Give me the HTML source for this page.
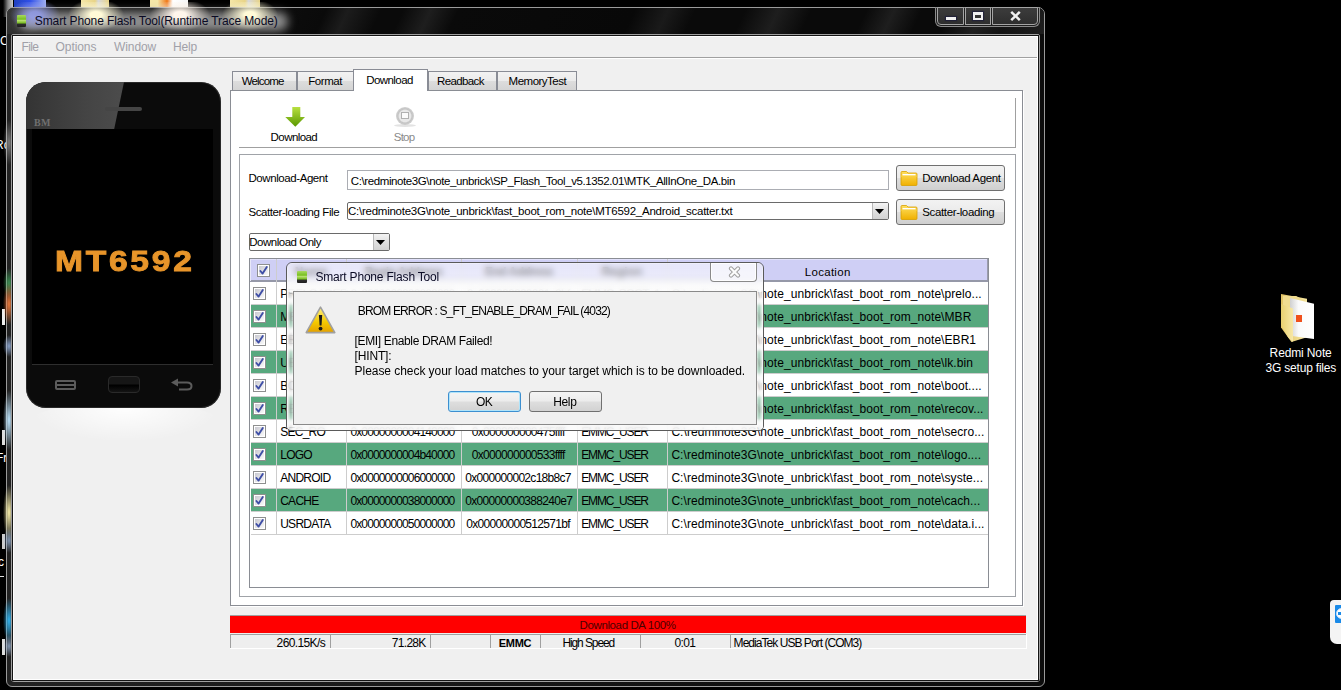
<!DOCTYPE html>
<html><head><meta charset="utf-8">
<style>
*{margin:0;padding:0;box-sizing:border-box}
html,body{width:1341px;height:690px;overflow:hidden;background:#000;font-family:"Liberation Sans",sans-serif;color:#000}
.a{position:absolute}
.nw{white-space:nowrap}
.tab{border:1px solid #898c95;border-bottom:none;background:linear-gradient(#f2f2f2,#ebebeb 50%,#dddddd 50%,#d4d4d4)}
.btn{border:1px solid #707070;border-radius:3px;background:linear-gradient(#f2f2f2,#ebebeb 48%,#dddddd 52%,#cfcfcf)}
</style></head><body>
<div class="a" style="left:14px;top:0;width:32px;height:8px;background:linear-gradient(90deg,#2040c0,#3050e8 50%,#a0b0f0)"></div>
<div class="a" style="left:3px;top:0;width:10px;height:17px;background:linear-gradient(90deg,#000,#888 50%,#ccc)"></div>
<div class="a" style="left:81px;top:0;width:28px;height:7px;background:linear-gradient(90deg,#f4e6a8,#e8d488 50%,#d8d8d8 62%,#e8d488)"></div>
<div class="a" style="left:150px;top:0;width:38px;height:7px;background:linear-gradient(90deg,#f4e6a8 20%,#f07818 45%,#fff 60%,#f4f4f4)"></div>
<div class="a" style="left:230px;top:0;width:30px;height:7px;background:linear-gradient(90deg,#f4e6a8,#e8d488 50%,#d8d8d8 62%,#e8d488)"></div>
<div class="a" style="left:1281px;top:294px;width:34px;height:50px">
 <div class="a" style="left:0;top:0;width:26px;height:48px;background:linear-gradient(90deg,#e2c466,#f6e6a0);clip-path:polygon(0 0,100% 10%,100% 90%,40% 100%,0 70%)"></div>
 <div class="a" style="left:2px;top:2px;width:22px;height:12px;background:#f0dc90;clip-path:polygon(0 0,60% 0,100% 40%,100% 100%,0 100%)"></div>
 <div class="a" style="left:9px;top:4px;width:24px;height:41px;background:linear-gradient(90deg,#d0d0d0,#fafafa 35%,#fff);clip-path:polygon(0 0,100% 14%,100% 100%,0 92%)"></div>
 <div class="a" style="left:0;top:10px;width:12px;height:38px;background:linear-gradient(90deg,#e8d070,#f8e8a8);clip-path:polygon(0 0,100% 12%,100% 100%,60% 88%,0 55%)"></div>
 <div class="a" style="left:15px;top:21px;width:6px;height:7px;background:#f0501c"></div>
</div>
<div class="a" style="left:1330px;top:600px;width:14px;height:44px;border-radius:4px 0 0 7px;background:#f4f4f4"></div>
<div class="a" style="left:1335px;top:605px;width:8px;height:18px;background:#1a8ae8;border-radius:1px"></div>
<div class="a" style="left:1336px;top:608px;width:11px;height:11px;border-radius:50%;background:#fff;border:1px solid #c8e0f8"></div>
<div class="a" style="left:1338px;top:612px;width:6px;height:3px;background:#1a8ae8"></div>
<div class="a" style="left:2px;top:309px;width:3px;height:16px;background:#eee"></div>
<div class="a" style="left:2px;top:430px;width:3px;height:15px;background:#ddd"></div>
<div class="a" style="left:2px;top:534px;width:3px;height:15px;background:#ccc"></div>
<div class="a" style="left:2px;top:639px;width:3px;height:16px;background:#ddd"></div>
<div class="a nw" style="left:0.00px;top:35px;font-size:12px;line-height:12px;letter-spacing:0.000px;color:#fff;">C</div>
<div class="a nw" style="left:-1.00px;top:139px;font-size:12px;line-height:12px;letter-spacing:0.000px;color:#fff;margin-left:-4px">Rc</div>
<div class="a nw" style="left:-1.00px;top:452px;font-size:12px;line-height:12px;letter-spacing:0.000px;color:#fff;margin-left:-3px">Fr</div>
<div class="a nw" style="left:-1.00px;top:556px;font-size:12px;line-height:12px;letter-spacing:0.000px;color:#fff;margin-left:-1px">c</div>
<div class="a" style="left:0;top:576px;width:4px;height:1px;background:#ddd"></div>
<div class="a" style="left:6px;top:7px;width:1039px;height:680px;border:1px solid #9a9a9a;border-radius:7px 7px 6px 6px;background:linear-gradient(90deg,#222,#1a1a1a 30%,#101010 70%,#0c0c0c)"></div>
<div class="a" style="left:3px;top:268px;width:12px;height:30px;background:radial-gradient(ellipse 50% 50% at 50% 50%,rgba(70,180,100,.75),rgba(0,0,0,0))"></div>
<div class="a" style="left:3px;top:283px;width:12px;height:42px;background:radial-gradient(ellipse 50% 50% at 50% 50%,rgba(245,125,60,.95),rgba(0,0,0,0))"></div>
<div class="a" style="left:3px;top:335px;width:12px;height:22px;background:radial-gradient(ellipse 50% 50% at 50% 50%,rgba(160,190,240,.8),rgba(0,0,0,0))"></div>
<div class="a" style="left:3px;top:390px;width:12px;height:60px;background:radial-gradient(ellipse 50% 50% at 50% 50%,rgba(190,230,255,1),rgba(0,0,0,0))"></div>
<div class="a" style="left:3px;top:485px;width:12px;height:55px;background:radial-gradient(ellipse 50% 50% at 50% 50%,rgba(250,240,170,1),rgba(0,0,0,0))"></div>
<div class="a" style="left:3px;top:528px;width:12px;height:25px;background:radial-gradient(ellipse 50% 50% at 50% 50%,rgba(170,200,240,.7),rgba(0,0,0,0))"></div>
<div class="a" style="left:3px;top:598px;width:12px;height:45px;background:radial-gradient(ellipse 50% 50% at 50% 50%,rgba(50,180,240,1),rgba(0,0,0,0))"></div>
<div class="a" style="left:3px;top:635px;width:12px;height:22px;background:radial-gradient(ellipse 50% 50% at 50% 50%,rgba(170,200,240,.7),rgba(0,0,0,0))"></div>
<div class="a" style="left:3px;top:120px;width:12px;height:45px;background:radial-gradient(ellipse 50% 50% at 50% 50%,rgba(210,210,210,.5),rgba(0,0,0,0))"></div>
<div class="a" style="left:7px;top:8px;width:1037px;height:26px;border-radius:6px 6px 0 0;background:linear-gradient(115deg,#3a3a3a 0px,#1a1a1a 40px,#0a0a0a 290px,#1c1c1c 310px,#0a0a0a 340px,#0a0a0a 360px,#1e1e1e 385px,#0a0a0a 410px,#080808 570px,#1a1a1a 600px,#0a0a0a 625px,#0a0a0a 670px,#1e1e1e 700px,#0a0a0a 730px,#0a0a0a 780px,#1e1e1e 805px,#0a0a0a 830px,#0a0a0a 855px,#202020 885px,#141414 910px,#2a2a2a 1000px,#1a1a1a 1037px)"></div>
<div class="a" style="left:18px;top:12px;width:270px;height:19px;border-radius:10px;background:rgba(175,175,175,.8);filter:blur(5px)"></div>
<div class="a" style="left:10px;top:2px;width:50px;height:32px;background:radial-gradient(ellipse 50% 50% at 50% 40%,rgba(150,160,240,.85) 20%,rgba(0,0,0,0))"></div>
<div class="a" style="left:68px;top:2px;width:56px;height:32px;background:radial-gradient(ellipse 50% 50% at 50% 40%,rgba(255,250,215,1) 20%,rgba(0,0,0,0))"></div>
<div class="a" style="left:150px;top:2px;width:60px;height:32px;background:radial-gradient(ellipse 50% 50% at 50% 40%,rgba(255,245,235,1) 20%,rgba(0,0,0,0))"></div>
<div class="a" style="left:222px;top:2px;width:56px;height:32px;background:radial-gradient(ellipse 50% 50% at 50% 40%,rgba(255,250,215,1) 20%,rgba(0,0,0,0))"></div>
<div class="a" style="left:17px;top:15px;width:9px;height:12px;border-radius:1px;background:linear-gradient(#a8d860,#78c020 35%,#b8e070 45%,#70b818 70%,#303030 72%,#202020)"></div>
<div class="a nw" style="left:34.80px;top:15px;font-size:12px;line-height:12px;letter-spacing:-0.102px;color:#0a0a24;">Smart Phone Flash Tool(Runtime Trace Mode)</div>
<div class="a" style="left:935px;top:7px;width:105px;height:20px;border:1px solid #8a8a8a;border-top:none;border-radius:0 0 6px 6px;background:#1e1e1e"></div>
<div class="a" style="left:935px;top:7px;width:105px;height:1px;background:#8a8a8a"></div>
<div class="a" style="left:937px;top:7px;width:27px;height:18px;border:1px solid #a4a4a4;border-radius:0 0 0 4px;background:linear-gradient(#3c3c3c,#2e2e2e)"></div>
<div class="a" style="left:965px;top:7px;width:26px;height:18px;border:1px solid #a4a4a4;background:linear-gradient(#3c3c3c,#2e2e2e)"></div>
<div class="a" style="left:992px;top:7px;width:46px;height:18px;border:1px solid #a4a4a4;border-radius:0 0 4px 0;background:linear-gradient(#3c3c3c,#2e2e2e)"></div>
<div class="a" style="left:946px;top:17px;width:10px;height:3px;background:#f0f0f0;box-shadow:0 0 1px 1px rgba(20,20,60,.55)"></div>
<div class="a" style="left:973px;top:12px;width:10px;height:8px;border:2px solid #f0f0f0;border-top-width:3px;box-shadow:0 0 1px 1px rgba(20,20,60,.55)"></div>
<svg class="a" style="left:1010px;top:11px" width="11" height="10" viewBox="0 0 11 10"><path d="M1.2 0.9 L9.8 9.1 M9.8 0.9 L1.2 9.1" stroke="#f0f0f0" stroke-width="2.5"/></svg>
<div class="a" style="left:11px;top:34px;width:1029px;height:648px;border:1px solid #a0a0a0;border-radius:2px 2px 3px 3px"></div>
<div class="a" style="left:12px;top:35px;width:1027px;height:646px;background:#141414"></div>
<div class="a" style="left:13px;top:36px;width:1025px;height:644px;background:#fff"></div>
<div class="a" style="left:14px;top:37px;width:1023px;height:642px;background:#f0f0f0"></div>
<div class="a nw" style="left:21.60px;top:41px;font-size:12px;line-height:12px;letter-spacing:-0.633px;color:#a0a0a8;">File</div>
<div class="a nw" style="left:55.60px;top:41px;font-size:12px;line-height:12px;letter-spacing:-0.083px;color:#a0a0a8;">Options</div>
<div class="a nw" style="left:114.00px;top:41px;font-size:12px;line-height:12px;letter-spacing:-0.080px;color:#a0a0a8;">Window</div>
<div class="a nw" style="left:173.00px;top:41px;font-size:12px;line-height:12px;letter-spacing:-0.167px;color:#a0a0a8;">Help</div>
<div class="a" style="left:14px;top:57px;width:1023px;height:1px;background:#a0a0a0"></div>
<div class="a" style="left:14px;top:58px;width:1023px;height:1px;background:#fff"></div>
<div class="a" style="left:30px;top:402px;width:190px;height:40px;border-radius:50%;background:radial-gradient(ellipse at 50% 15%,rgba(255,255,255,.95),rgba(240,240,240,0) 70%)"></div>
<div class="a" style="left:26px;top:82px;width:195px;height:326px;border-radius:20px;background:#0b0b0b;overflow:hidden;box-shadow:0 0 0 1px rgba(60,60,60,.6) inset">
  <div class="a" style="left:0;top:0;width:98px;height:47px;background:linear-gradient(90deg,#343434,#444 60%,#4c4c4c);clip-path:polygon(0 0,100% 0,90% 100%,0 100%)"></div>
  <div class="a" style="left:79px;top:25px;width:37px;height:4px;border-radius:2px;background:#454545"></div>
  <div class="a nw" style="left:8px;top:36px;font-family:'Liberation Serif',serif;font-size:10px;line-height:10px;color:#707070;letter-spacing:0.3px;font-weight:bold">BM</div>
  <div class="a" style="left:6px;top:47px;width:181px;height:235px;background:#000"></div>
  <div class="a" style="left:6px;top:282px;width:181px;height:1px;background:#2e2e2e"></div>
  <div class="a" style="left:29px;top:298px;width:21px;height:10px;border:2px solid #5c5c5c;border-radius:2px"></div>
  <div class="a" style="left:31px;top:302px;width:17px;height:2px;background:#5c5c5c"></div>
  <div class="a" style="left:82px;top:294px;width:32px;height:17px;border:1px solid #2a2a2a;border-radius:4px;background:linear-gradient(#161616 45%,#000 55%,#141414)"></div>
  <svg class="a" style="left:144px;top:296px" width="24" height="14" viewBox="0 0 24 14"><path d="M7 4.5 H17 Q21.5 4.5 21.5 8 Q21.5 11.5 17 11.5 H9" fill="none" stroke="#5c5c5c" stroke-width="2"/><path d="M1 4.5 L8 0.5 L8 8.5 Z" fill="#5c5c5c"/></svg>
</div>
<div class="a nw" style="left:54.80px;top:246px;font-size:30px;line-height:30px;letter-spacing:2.420px;color:#e8952a;font-weight:bold;transform:scaleX(1.12);transform-origin:0 0;-webkit-text-stroke:0.9px currentColor;">MT6592</div>
<div class="a" style="left:230px;top:90px;width:793px;height:516px;border:1px solid #8a8d94;background:#fff"></div>
<div class="a" style="left:231px;top:606px;width:793px;height:1px;background:#fff"></div>
<div class="a" style="left:1023px;top:91px;width:1px;height:515px;background:#fff"></div>
<div class="a tab" style="left:232px;top:71px;width:65px;height:19px"></div>
<div class="a nw" style="left:241.80px;top:76px;font-size:11.5px;line-height:11.5px;letter-spacing:-0.867px;color:#000;">Welcome</div>
<div class="a tab" style="left:297px;top:71px;width:57px;height:19px"></div>
<div class="a nw" style="left:308.20px;top:76px;font-size:11.5px;line-height:11.5px;letter-spacing:-0.420px;color:#000;">Format</div>
<div class="a tab" style="left:428px;top:71px;width:69px;height:19px"></div>
<div class="a nw" style="left:437.00px;top:76px;font-size:11.5px;line-height:11.5px;letter-spacing:-0.629px;color:#000;">Readback</div>
<div class="a tab" style="left:497px;top:71px;width:80px;height:19px"></div>
<div class="a nw" style="left:508.60px;top:76px;font-size:11.5px;line-height:11.5px;letter-spacing:-0.500px;color:#000;">MemoryTest</div>
<div class="a" style="left:353px;top:69px;width:75px;height:22px;border:1px solid #898c95;border-bottom:none;background:#fff"></div>
<div class="a nw" style="left:366.20px;top:75px;font-size:11.5px;line-height:11.5px;letter-spacing:-0.557px;color:#000;">Download</div>
<div class="a" style="left:239px;top:147px;width:777px;height:1px;background:#a0a0a0"></div>
<div class="a" style="left:1015px;top:98px;width:1px;height:50px;background:#a0a0a0"></div>
<svg class="a" style="left:285px;top:107px" width="20" height="20" viewBox="0 0 20 20"><defs><linearGradient id="ga" x1="0" y1="0" x2="0" y2="1"><stop offset="0" stop-color="#b8e040"/><stop offset="1" stop-color="#5a9800"/></linearGradient></defs><path d="M7.3 0 H15.3 V10 H20 L10.3 19.7 L0.3 10 H7.3 Z" fill="url(#ga)"/></svg>
<div class="a nw" style="left:270.60px;top:132px;font-size:11.5px;line-height:11.5px;letter-spacing:-0.571px;color:#000;">Download</div>
<div class="a" style="left:396px;top:107px;width:18px;height:18px;border-radius:50%;background:radial-gradient(circle,#e8e8e8 0 45%,#c4c4c4 55%,#d8d8d8 80%,#a8a8a8 100%)"></div>
<div class="a" style="left:401px;top:112px;width:8px;height:7px;background:#fafafa;border:1px solid #b0b0b0"></div>
<div class="a" style="left:394px;top:124px;width:22px;height:3px;border-radius:50%;background:rgba(200,200,200,.5)"></div>
<div class="a nw" style="left:393.80px;top:132px;font-size:11.5px;line-height:11.5px;letter-spacing:-0.800px;color:#8a8a8a;">Stop</div>
<div class="a" style="left:239px;top:154px;width:777px;height:443px;border:1px solid #a0a3a8"></div>
<div class="a nw" style="left:248.40px;top:173px;font-size:11.5px;line-height:11.5px;letter-spacing:-0.415px;color:#000;">Download-Agent</div>
<div class="a nw" style="left:248.40px;top:207px;font-size:11.5px;line-height:11.5px;letter-spacing:-0.411px;color:#000;">Scatter-loading File</div>
<div class="a" style="left:347px;top:170px;width:542px;height:20px;border:1px solid #abadb3;background:#fff"></div>
<div class="a nw" style="left:350.80px;top:176px;font-size:11.5px;line-height:11.5px;letter-spacing:-0.400px;color:#000;">C:\redminote3G\note_unbrick\SP_Flash_Tool_v5.1352.01\MTK_AllInOne_DA.bin</div>
<div class="a" style="left:347px;top:202px;width:542px;height:18px;border:1px solid #6a6a6a;border-radius:2px;background:#fff"></div>
<div class="a" style="left:872px;top:203px;width:16px;height:16px;background:linear-gradient(#f4f4f4,#e0e0e0 50%,#d2d2d2);border-left:1px solid #b8b8b8"></div>
<svg class="a" style="left:875px;top:209px" width="9" height="5"><path d="M0 0H9L4.5 5Z" fill="#000"/></svg>
<div class="a nw" style="left:348.00px;top:206px;font-size:11.5px;line-height:11.5px;letter-spacing:-0.250px;color:#000;">C:\redminote3G\note_unbrick\fast_boot_rom_note\MT6592_Android_scatter.txt</div>
<div class="a btn" style="left:896px;top:165px;width:109px;height:26px"></div>
<svg class="a" style="left:900px;top:171px" width="18" height="15" viewBox="0 0 18 15"><defs><linearGradient id="fg1" x1="0" y1="0" x2="0" y2="1"><stop offset="0" stop-color="#ffe060"/><stop offset="1" stop-color="#f0b000"/></linearGradient></defs><path d="M1 1.5 Q1 0.5 2 0.5 H6.5 L8 2 H16 Q17 2 17 3 V13.5 Q17 14.5 16 14.5 H2 Q1 14.5 1 13.5 Z" fill="url(#fg1)" stroke="#d8a000" stroke-width="0.8"/><rect x="2.5" y="3" width="13" height="1.6" fill="#fff"/><rect x="1" y="4.6" width="16" height="1" fill="#f8d040"/></svg>
<div class="a nw" style="left:922.20px;top:173px;font-size:11.5px;line-height:11.5px;letter-spacing:-0.392px;color:#000;">Download Agent</div>
<div class="a btn" style="left:896px;top:199px;width:109px;height:26px"></div>
<svg class="a" style="left:900px;top:205px" width="18" height="15" viewBox="0 0 18 15"><defs><linearGradient id="fg2" x1="0" y1="0" x2="0" y2="1"><stop offset="0" stop-color="#ffe060"/><stop offset="1" stop-color="#f0b000"/></linearGradient></defs><path d="M1 1.5 Q1 0.5 2 0.5 H6.5 L8 2 H16 Q17 2 17 3 V13.5 Q17 14.5 16 14.5 H2 Q1 14.5 1 13.5 Z" fill="url(#fg2)" stroke="#d8a000" stroke-width="0.8"/><rect x="2.5" y="3" width="13" height="1.6" fill="#fff"/><rect x="1" y="4.6" width="16" height="1" fill="#f8d040"/></svg>
<div class="a nw" style="left:922.20px;top:207px;font-size:11.5px;line-height:11.5px;letter-spacing:-0.350px;color:#000;">Scatter-loading</div>
<div class="a" style="left:249px;top:233px;width:141px;height:18px;border:1px solid #6a6a6a;border-radius:2px;background:#fff"></div>
<div class="a" style="left:373px;top:234px;width:16px;height:16px;background:linear-gradient(#f4f4f4,#e0e0e0 50%,#d2d2d2);border-left:1px solid #b8b8b8"></div>
<svg class="a" style="left:376px;top:240px" width="9" height="5"><path d="M0 0H9L4.5 5Z" fill="#000"/></svg>
<div class="a nw" style="left:249.20px;top:237px;font-size:11.5px;line-height:11.5px;letter-spacing:-0.483px;color:#000;">Download Only</div>
<div class="a" style="left:249px;top:258px;width:740px;height:330px;border:1px solid #8a8d94;background:#fff"></div>
<div class="a" style="left:250px;top:259px;width:738px;height:23px;background:#cfcff5"></div>
<div class="a" style="left:250px;top:259px;width:738px;height:1px;background:#e2e2fc"></div>
<div class="a" style="left:987px;top:259px;width:1px;height:23px;background:#9a9cac"></div>
<div class="a" style="left:250px;top:280px;width:738px;height:2px;background:#9598a8"></div>
<div class="a nw" style="left:804.80px;top:267px;font-size:11.5px;line-height:11.5px;letter-spacing:0.286px;color:#000;">Location</div>
<div class="a nw" style="left:276px;top:266px;width:70px;text-align:center;font-size:12px;line-height:12px;font-weight:bold">Name</div>
<div class="a nw" style="left:346px;top:266px;width:115px;text-align:center;font-size:12px;line-height:12px;letter-spacing:-0.5px;font-weight:bold">Begin Address</div>
<div class="a nw" style="left:461px;top:266px;width:116px;text-align:center;font-size:12px;line-height:12px;letter-spacing:-0.5px;font-weight:bold">End Address</div>
<div class="a nw" style="left:577px;top:266px;width:90px;text-align:center;font-size:12px;line-height:12px;font-weight:bold">Region</div>
<svg width="0" height="0" style="position:absolute"><defs><linearGradient id="cbg" x1="0" y1="0" x2="1" y2="1"><stop offset="0" stop-color="#c8c8d0"/><stop offset="1" stop-color="#fafafa"/></linearGradient></defs></svg>
<svg class="a" style="left:257px;top:264px" width="13" height="13" viewBox="0 0 13 13"><rect x="0.5" y="0.5" width="12" height="12" fill="#fff" stroke="#8e8f8f"/><rect x="2" y="2" width="9" height="9" fill="url(#cbg)"/><path d="M3.4 7 L5.6 9.6 L9.8 3" fill="none" stroke="#3e4ea6" stroke-width="1.9" stroke-linecap="round" stroke-linejoin="round"/></svg>
<div class="a" style="left:251px;top:304px;width:737px;height:1px;background:#cdcdcd"></div>
<svg class="a" style="left:253px;top:287px" width="13" height="13" viewBox="0 0 13 13"><rect x="0.5" y="0.5" width="12" height="12" fill="#fff" stroke="#8e8f8f"/><rect x="2" y="2" width="9" height="9" fill="url(#cbg)"/><path d="M3.4 7 L5.6 9.6 L9.8 3" fill="none" stroke="#3e4ea6" stroke-width="1.9" stroke-linecap="round" stroke-linejoin="round"/></svg>
<div class="a nw" style="left:280.20px;top:288px;font-size:12px;line-height:12px;letter-spacing:-0.733px;color:#000;">PRELOADER</div>
<div class="a nw" style="left:350.40px;top:288px;font-size:12px;line-height:12px;letter-spacing:-0.859px;color:#000;">0x0000000000000000</div>
<div class="a nw" style="left:466.80px;top:288px;font-size:12px;line-height:12px;letter-spacing:-0.700px;color:#000;">0x000000000001c2bf</div>
<div class="a nw" style="left:581.20px;top:288px;font-size:12px;line-height:12px;letter-spacing:-1.112px;color:#000;">EMMC_BOOT_1</div>
<div class="a nw" style="left:671.40px;top:288px;font-size:12px;line-height:12px;letter-spacing:0.063px;color:#000;">C:\redminote3G\note_unbrick\fast_boot_rom_note\prelo...</div>
<div class="a" style="left:251px;top:305px;width:737px;height:22px;background:#57a87e"></div>
<div class="a" style="left:251px;top:327px;width:737px;height:1px;background:#cdcdcd"></div>
<svg class="a" style="left:253px;top:310px" width="13" height="13" viewBox="0 0 13 13"><rect x="0.5" y="0.5" width="12" height="12" fill="#fff" stroke="#8e8f8f"/><rect x="2" y="2" width="9" height="9" fill="url(#cbg)"/><path d="M3.4 7 L5.6 9.6 L9.8 3" fill="none" stroke="#3e4ea6" stroke-width="1.9" stroke-linecap="round" stroke-linejoin="round"/></svg>
<div class="a nw" style="left:280.20px;top:311px;font-size:12px;line-height:12px;letter-spacing:-0.733px;color:#000;">MBR</div>
<div class="a nw" style="left:350.40px;top:311px;font-size:12px;line-height:12px;letter-spacing:-0.859px;color:#000;">0x0000000000000000</div>
<div class="a nw" style="left:468.30px;top:311px;font-size:12px;line-height:12px;letter-spacing:-0.700px;color:#000;">0x00000000000001ff</div>
<div class="a nw" style="left:581.20px;top:311px;font-size:12px;line-height:12px;letter-spacing:-1.112px;color:#000;">EMMC_USER</div>
<div class="a nw" style="left:671.40px;top:311px;font-size:12px;line-height:12px;letter-spacing:0.063px;color:#000;">C:\redminote3G\note_unbrick\fast_boot_rom_note\MBR</div>
<div class="a" style="left:251px;top:350px;width:737px;height:1px;background:#cdcdcd"></div>
<svg class="a" style="left:253px;top:333px" width="13" height="13" viewBox="0 0 13 13"><rect x="0.5" y="0.5" width="12" height="12" fill="#fff" stroke="#8e8f8f"/><rect x="2" y="2" width="9" height="9" fill="url(#cbg)"/><path d="M3.4 7 L5.6 9.6 L9.8 3" fill="none" stroke="#3e4ea6" stroke-width="1.9" stroke-linecap="round" stroke-linejoin="round"/></svg>
<div class="a nw" style="left:280.20px;top:334px;font-size:12px;line-height:12px;letter-spacing:-0.733px;color:#000;">EBR1</div>
<div class="a nw" style="left:350.40px;top:334px;font-size:12px;line-height:12px;letter-spacing:-0.859px;color:#000;">0x0000000000080000</div>
<div class="a nw" style="left:468.30px;top:334px;font-size:12px;line-height:12px;letter-spacing:-0.700px;color:#000;">0x00000000000801ff</div>
<div class="a nw" style="left:581.20px;top:334px;font-size:12px;line-height:12px;letter-spacing:-1.112px;color:#000;">EMMC_USER</div>
<div class="a nw" style="left:671.40px;top:334px;font-size:12px;line-height:12px;letter-spacing:0.063px;color:#000;">C:\redminote3G\note_unbrick\fast_boot_rom_note\EBR1</div>
<div class="a" style="left:251px;top:351px;width:737px;height:22px;background:#57a87e"></div>
<div class="a" style="left:251px;top:373px;width:737px;height:1px;background:#cdcdcd"></div>
<svg class="a" style="left:253px;top:356px" width="13" height="13" viewBox="0 0 13 13"><rect x="0.5" y="0.5" width="12" height="12" fill="#fff" stroke="#8e8f8f"/><rect x="2" y="2" width="9" height="9" fill="url(#cbg)"/><path d="M3.4 7 L5.6 9.6 L9.8 3" fill="none" stroke="#3e4ea6" stroke-width="1.9" stroke-linecap="round" stroke-linejoin="round"/></svg>
<div class="a nw" style="left:280.20px;top:357px;font-size:12px;line-height:12px;letter-spacing:-0.733px;color:#000;">UBOOT</div>
<div class="a nw" style="left:350.40px;top:357px;font-size:12px;line-height:12px;letter-spacing:-0.859px;color:#000;">0x0000000003d20000</div>
<div class="a nw" style="left:466.80px;top:357px;font-size:12px;line-height:12px;letter-spacing:-0.700px;color:#000;">0x0000000003d5ebcf</div>
<div class="a nw" style="left:581.20px;top:357px;font-size:12px;line-height:12px;letter-spacing:-1.112px;color:#000;">EMMC_USER</div>
<div class="a nw" style="left:671.40px;top:357px;font-size:12px;line-height:12px;letter-spacing:0.063px;color:#000;">C:\redminote3G\note_unbrick\fast_boot_rom_note\lk.bin</div>
<div class="a" style="left:251px;top:396px;width:737px;height:1px;background:#cdcdcd"></div>
<svg class="a" style="left:253px;top:379px" width="13" height="13" viewBox="0 0 13 13"><rect x="0.5" y="0.5" width="12" height="12" fill="#fff" stroke="#8e8f8f"/><rect x="2" y="2" width="9" height="9" fill="url(#cbg)"/><path d="M3.4 7 L5.6 9.6 L9.8 3" fill="none" stroke="#3e4ea6" stroke-width="1.9" stroke-linecap="round" stroke-linejoin="round"/></svg>
<div class="a nw" style="left:280.20px;top:380px;font-size:12px;line-height:12px;letter-spacing:-0.733px;color:#000;">BOOTIMG</div>
<div class="a nw" style="left:350.40px;top:380px;font-size:12px;line-height:12px;letter-spacing:-0.859px;color:#000;">0x0000000003d80000</div>
<div class="a nw" style="left:468.30px;top:380px;font-size:12px;line-height:12px;letter-spacing:-0.700px;color:#000;">0x000000000428a7ff</div>
<div class="a nw" style="left:581.20px;top:380px;font-size:12px;line-height:12px;letter-spacing:-1.112px;color:#000;">EMMC_USER</div>
<div class="a nw" style="left:671.40px;top:380px;font-size:12px;line-height:12px;letter-spacing:0.063px;color:#000;">C:\redminote3G\note_unbrick\fast_boot_rom_note\boot....</div>
<div class="a" style="left:251px;top:397px;width:737px;height:22px;background:#57a87e"></div>
<div class="a" style="left:251px;top:419px;width:737px;height:1px;background:#cdcdcd"></div>
<svg class="a" style="left:253px;top:402px" width="13" height="13" viewBox="0 0 13 13"><rect x="0.5" y="0.5" width="12" height="12" fill="#fff" stroke="#8e8f8f"/><rect x="2" y="2" width="9" height="9" fill="url(#cbg)"/><path d="M3.4 7 L5.6 9.6 L9.8 3" fill="none" stroke="#3e4ea6" stroke-width="1.9" stroke-linecap="round" stroke-linejoin="round"/></svg>
<div class="a nw" style="left:280.20px;top:403px;font-size:12px;line-height:12px;letter-spacing:-0.733px;color:#000;">RECOVERY</div>
<div class="a nw" style="left:350.40px;top:403px;font-size:12px;line-height:12px;letter-spacing:-0.859px;color:#000;">0x0000000004380000</div>
<div class="a nw" style="left:468.30px;top:403px;font-size:12px;line-height:12px;letter-spacing:-0.700px;color:#000;">0x000000000490a7ff</div>
<div class="a nw" style="left:581.20px;top:403px;font-size:12px;line-height:12px;letter-spacing:-1.112px;color:#000;">EMMC_USER</div>
<div class="a nw" style="left:671.40px;top:403px;font-size:12px;line-height:12px;letter-spacing:0.063px;color:#000;">C:\redminote3G\note_unbrick\fast_boot_rom_note\recov...</div>
<div class="a" style="left:251px;top:442px;width:737px;height:1px;background:#cdcdcd"></div>
<svg class="a" style="left:253px;top:425px" width="13" height="13" viewBox="0 0 13 13"><rect x="0.5" y="0.5" width="12" height="12" fill="#fff" stroke="#8e8f8f"/><rect x="2" y="2" width="9" height="9" fill="url(#cbg)"/><path d="M3.4 7 L5.6 9.6 L9.8 3" fill="none" stroke="#3e4ea6" stroke-width="1.9" stroke-linecap="round" stroke-linejoin="round"/></svg>
<div class="a nw" style="left:280.20px;top:426px;font-size:12px;line-height:12px;letter-spacing:-0.733px;color:#000;">SEC_RO</div>
<div class="a nw" style="left:350.40px;top:426px;font-size:12px;line-height:12px;letter-spacing:-0.859px;color:#000;">0x0000000004140000</div>
<div class="a nw" style="left:471.80px;top:426px;font-size:12px;line-height:12px;letter-spacing:-0.700px;color:#000;">0x000000000475ffff</div>
<div class="a nw" style="left:581.20px;top:426px;font-size:12px;line-height:12px;letter-spacing:-1.112px;color:#000;">EMMC_USER</div>
<div class="a nw" style="left:671.40px;top:426px;font-size:12px;line-height:12px;letter-spacing:0.063px;color:#000;">C:\redminote3G\note_unbrick\fast_boot_rom_note\secro...</div>
<div class="a" style="left:251px;top:443px;width:737px;height:22px;background:#57a87e"></div>
<div class="a" style="left:251px;top:465px;width:737px;height:1px;background:#cdcdcd"></div>
<svg class="a" style="left:253px;top:448px" width="13" height="13" viewBox="0 0 13 13"><rect x="0.5" y="0.5" width="12" height="12" fill="#fff" stroke="#8e8f8f"/><rect x="2" y="2" width="9" height="9" fill="url(#cbg)"/><path d="M3.4 7 L5.6 9.6 L9.8 3" fill="none" stroke="#3e4ea6" stroke-width="1.9" stroke-linecap="round" stroke-linejoin="round"/></svg>
<div class="a nw" style="left:280.20px;top:449px;font-size:12px;line-height:12px;letter-spacing:-0.733px;color:#000;">LOGO</div>
<div class="a nw" style="left:350.40px;top:449px;font-size:12px;line-height:12px;letter-spacing:-0.859px;color:#000;">0x0000000004b40000</div>
<div class="a nw" style="left:471.80px;top:449px;font-size:12px;line-height:12px;letter-spacing:-0.700px;color:#000;">0x000000000533ffff</div>
<div class="a nw" style="left:581.20px;top:449px;font-size:12px;line-height:12px;letter-spacing:-1.112px;color:#000;">EMMC_USER</div>
<div class="a nw" style="left:671.40px;top:449px;font-size:12px;line-height:12px;letter-spacing:0.063px;color:#000;">C:\redminote3G\note_unbrick\fast_boot_rom_note\logo....</div>
<div class="a" style="left:251px;top:488px;width:737px;height:1px;background:#cdcdcd"></div>
<svg class="a" style="left:253px;top:471px" width="13" height="13" viewBox="0 0 13 13"><rect x="0.5" y="0.5" width="12" height="12" fill="#fff" stroke="#8e8f8f"/><rect x="2" y="2" width="9" height="9" fill="url(#cbg)"/><path d="M3.4 7 L5.6 9.6 L9.8 3" fill="none" stroke="#3e4ea6" stroke-width="1.9" stroke-linecap="round" stroke-linejoin="round"/></svg>
<div class="a nw" style="left:280.20px;top:472px;font-size:12px;line-height:12px;letter-spacing:-0.733px;color:#000;">ANDROID</div>
<div class="a nw" style="left:350.40px;top:472px;font-size:12px;line-height:12px;letter-spacing:-0.859px;color:#000;">0x0000000006000000</div>
<div class="a nw" style="left:465.30px;top:472px;font-size:12px;line-height:12px;letter-spacing:-0.700px;color:#000;">0x000000002c18b8c7</div>
<div class="a nw" style="left:581.20px;top:472px;font-size:12px;line-height:12px;letter-spacing:-1.112px;color:#000;">EMMC_USER</div>
<div class="a nw" style="left:671.40px;top:472px;font-size:12px;line-height:12px;letter-spacing:0.063px;color:#000;">C:\redminote3G\note_unbrick\fast_boot_rom_note\syste...</div>
<div class="a" style="left:251px;top:489px;width:737px;height:22px;background:#57a87e"></div>
<div class="a" style="left:251px;top:511px;width:737px;height:1px;background:#cdcdcd"></div>
<svg class="a" style="left:253px;top:494px" width="13" height="13" viewBox="0 0 13 13"><rect x="0.5" y="0.5" width="12" height="12" fill="#fff" stroke="#8e8f8f"/><rect x="2" y="2" width="9" height="9" fill="url(#cbg)"/><path d="M3.4 7 L5.6 9.6 L9.8 3" fill="none" stroke="#3e4ea6" stroke-width="1.9" stroke-linecap="round" stroke-linejoin="round"/></svg>
<div class="a nw" style="left:280.20px;top:495px;font-size:12px;line-height:12px;letter-spacing:-0.733px;color:#000;">CACHE</div>
<div class="a nw" style="left:350.40px;top:495px;font-size:12px;line-height:12px;letter-spacing:-0.859px;color:#000;">0x0000000038000000</div>
<div class="a nw" style="left:465.30px;top:495px;font-size:12px;line-height:12px;letter-spacing:-0.700px;color:#000;">0x00000000388240e7</div>
<div class="a nw" style="left:581.20px;top:495px;font-size:12px;line-height:12px;letter-spacing:-1.112px;color:#000;">EMMC_USER</div>
<div class="a nw" style="left:671.40px;top:495px;font-size:12px;line-height:12px;letter-spacing:0.063px;color:#000;">C:\redminote3G\note_unbrick\fast_boot_rom_note\cach...</div>
<div class="a" style="left:251px;top:534px;width:737px;height:1px;background:#cdcdcd"></div>
<svg class="a" style="left:253px;top:517px" width="13" height="13" viewBox="0 0 13 13"><rect x="0.5" y="0.5" width="12" height="12" fill="#fff" stroke="#8e8f8f"/><rect x="2" y="2" width="9" height="9" fill="url(#cbg)"/><path d="M3.4 7 L5.6 9.6 L9.8 3" fill="none" stroke="#3e4ea6" stroke-width="1.9" stroke-linecap="round" stroke-linejoin="round"/></svg>
<div class="a nw" style="left:280.20px;top:518px;font-size:12px;line-height:12px;letter-spacing:-0.733px;color:#000;">USRDATA</div>
<div class="a nw" style="left:350.40px;top:518px;font-size:12px;line-height:12px;letter-spacing:-0.859px;color:#000;">0x0000000050000000</div>
<div class="a nw" style="left:466.30px;top:518px;font-size:12px;line-height:12px;letter-spacing:-0.700px;color:#000;">0x00000000512571bf</div>
<div class="a nw" style="left:581.20px;top:518px;font-size:12px;line-height:12px;letter-spacing:-1.112px;color:#000;">EMMC_USER</div>
<div class="a nw" style="left:671.40px;top:518px;font-size:12px;line-height:12px;letter-spacing:0.063px;color:#000;">C:\redminote3G\note_unbrick\fast_boot_rom_note\data.i...</div>
<div class="a" style="left:276px;top:259px;width:1px;height:275px;background:#cdcdcd"></div>
<div class="a" style="left:346px;top:259px;width:1px;height:275px;background:#cdcdcd"></div>
<div class="a" style="left:461px;top:259px;width:1px;height:275px;background:#cdcdcd"></div>
<div class="a" style="left:577px;top:259px;width:1px;height:275px;background:#cdcdcd"></div>
<div class="a" style="left:667px;top:259px;width:1px;height:275px;background:#cdcdcd"></div>
<div class="a" style="left:250px;top:259px;width:1px;height:22px;background:#e8e8f8"></div>
<div class="a" style="left:230px;top:615px;width:796px;height:1px;background:#a0a0a0"></div>
<div class="a" style="left:230px;top:616px;width:796px;height:17px;background:#f00"></div>
<div class="a nw" style="left:579.60px;top:620px;font-size:11.5px;line-height:11.5px;letter-spacing:-0.387px;color:#4a0000;">Download DA 100%</div>
<div class="a" style="left:230px;top:633px;width:796px;height:16px;background:#eeeeee"></div>
<div class="a" style="left:230px;top:634px;width:796px;height:1px;background:#a0a0a0"></div>
<div class="a" style="left:230px;top:648px;width:797px;height:1px;background:#fff"></div>
<div class="a" style="left:230px;top:634px;width:1px;height:14px;background:#a0a0a0"></div>
<div class="a" style="left:330px;top:634px;width:1px;height:14px;background:#a0a0a0"></div>
<div class="a" style="left:430px;top:634px;width:1px;height:14px;background:#a0a0a0"></div>
<div class="a" style="left:490px;top:634px;width:1px;height:14px;background:#a0a0a0"></div>
<div class="a" style="left:540px;top:634px;width:1px;height:14px;background:#a0a0a0"></div>
<div class="a" style="left:640px;top:634px;width:1px;height:14px;background:#a0a0a0"></div>
<div class="a" style="left:730px;top:634px;width:1px;height:14px;background:#a0a0a0"></div>
<div class="a" style="left:1026px;top:634px;width:1px;height:15px;background:#fff"></div>
<div class="a nw" style="left:276.60px;top:637px;font-size:12px;line-height:12px;letter-spacing:-0.625px;color:#000;">260.15K/s</div>
<div class="a nw" style="left:391.80px;top:637px;font-size:12px;line-height:12px;letter-spacing:-0.700px;color:#000;">71.28K</div>
<div class="a nw" style="left:498.80px;top:638px;font-size:11px;line-height:11px;letter-spacing:-0.333px;color:#000;font-weight:bold;">EMMC</div>
<div class="a nw" style="left:562.40px;top:637px;font-size:12px;line-height:12px;letter-spacing:-1.100px;color:#000;">High Speed</div>
<div class="a nw" style="left:674.40px;top:637px;font-size:12px;line-height:12px;letter-spacing:-0.600px;color:#000;">0:01</div>
<div class="a nw" style="left:733.60px;top:637px;font-size:12px;line-height:12px;letter-spacing:-0.957px;color:#000;">MediaTek USB Port (COM3)</div>
<div class="a nw" style="left:1269.60px;top:347px;font-size:12px;line-height:12px;letter-spacing:-0.133px;color:#fff;text-shadow:0 0 2px #000">Redmi Note</div>
<div class="a nw" style="left:1265.60px;top:362px;font-size:12px;line-height:12px;letter-spacing:-0.208px;color:#fff;text-shadow:0 0 2px #000">3G setup files</div>
<div class="a" style="left:286px;top:262px;width:478px;height:169px;border:1px solid #5a5a5a;border-radius:6px 6px 5px 5px;overflow:hidden;box-shadow:0 0 0 1px rgba(255,255,255,.7) inset"><div class="a" style="left:0;top:0;width:476px;height:29px;background:linear-gradient(rgba(250,250,254,.5) 0px,rgba(250,250,254,.62) 12px,rgba(252,252,252,.9) 24px);backdrop-filter:blur(3px)"></div><div class="a" style="left:0;top:29px;width:7px;height:138px;background:linear-gradient(90deg,rgba(252,252,252,.95),rgba(250,250,250,.45) 55%,rgba(252,252,252,.9));backdrop-filter:blur(2px)"></div><div class="a" style="left:469px;top:29px;width:7px;height:138px;background:linear-gradient(90deg,rgba(252,252,252,.9),rgba(250,250,250,.45) 45%,rgba(252,252,252,.95));backdrop-filter:blur(2px)"></div><div class="a" style="left:7px;top:161px;width:462px;height:6px;background:rgba(250,250,250,.85);backdrop-filter:blur(2px)"></div></div>
<div class="a" style="left:297px;top:271px;width:10px;height:12px;border-radius:1px;background:linear-gradient(#a8d860,#78c020 35%,#b8e070 45%,#70b818 70%,#303030 72%,#202020)"></div>
<div class="a nw" style="left:315.40px;top:271px;font-size:12px;line-height:12px;letter-spacing:-0.190px;color:#0a0a24;">Smart Phone Flash Tool</div>
<div class="a" style="left:710px;top:263px;width:47px;height:19px;border:1px solid #8a8a8a;border-top:none;border-radius:0 0 4px 4px;background:rgba(248,248,252,.75);box-shadow:0 0 0 1px rgba(255,255,255,.9) inset"></div>
<svg class="a" style="left:728px;top:266px" width="13" height="12" viewBox="0 0 13 12"><path d="M3 2.5 L10 9.5 M10 2.5 L3 9.5" stroke="#a0a0a0" stroke-width="4.2" stroke-linecap="round"/><path d="M3 2.5 L10 9.5 M10 2.5 L3 9.5" stroke="#fcfcfc" stroke-width="2.2" stroke-linecap="round"/></svg>
<div class="a" style="left:293px;top:291px;width:464px;height:134px;border:1px solid #8a8a8a;background:#f0f0f0"></div>
<svg class="a" style="left:305px;top:306px" width="31" height="28" viewBox="0 0 31 28"><defs><linearGradient id="wg" x1="0" y1="0" x2="0" y2="1"><stop offset="0" stop-color="#fff080"/><stop offset="0.6" stop-color="#f4c800"/><stop offset="1" stop-color="#e4a000"/></linearGradient></defs><path d="M15.5 1.2 L29.8 26.6 H1.2 Z" fill="url(#wg)" stroke="#a0a0a0" stroke-width="1.6" stroke-linejoin="round"/><path d="M13.9 9 H17.2 L16.5 19.5 H14.6 Z" fill="#1a1a1a"/><circle cx="15.55" cy="22.6" r="1.9" fill="#1a1a1a"/></svg>
<div class="a nw" style="left:357.80px;top:305px;font-size:12px;line-height:12px;letter-spacing:-0.850px;color:#000;">BROM ERROR : S_FT_ENABLE_DRAM_FAIL (4032)</div>
<div class="a nw" style="left:354.60px;top:335px;font-size:12px;line-height:12px;letter-spacing:-0.363px;color:#000;">[EMI] Enable DRAM Failed!</div>
<div class="a nw" style="left:354.60px;top:350px;font-size:12px;line-height:12px;letter-spacing:-0.167px;color:#000;">[HINT]:</div>
<div class="a nw" style="left:354.60px;top:365px;font-size:12px;line-height:12px;letter-spacing:-0.052px;color:#000;">Please check your load matches to your target which is to be downloaded.</div>
<div class="a" style="left:448px;top:391px;width:73px;height:21px;border:1px solid #3c8fd0;border-radius:3px;background:linear-gradient(#f4f4f4,#ececec 48%,#dedede 52%,#d2d2d2);box-shadow:0 0 0 1px #b0e4fa inset"></div>
<div class="a nw" style="left:476.00px;top:396px;font-size:12px;line-height:12px;letter-spacing:-0.500px;color:#000;">OK</div>
<div class="a" style="left:529px;top:391px;width:73px;height:21px;border:1px solid #707070;border-radius:3px;background:linear-gradient(#f4f4f4,#ececec 48%,#dedede 52%,#d2d2d2)"></div>
<div class="a nw" style="left:553.20px;top:396px;font-size:12px;line-height:12px;letter-spacing:-0.333px;color:#000;">Help</div>
</body></html>
